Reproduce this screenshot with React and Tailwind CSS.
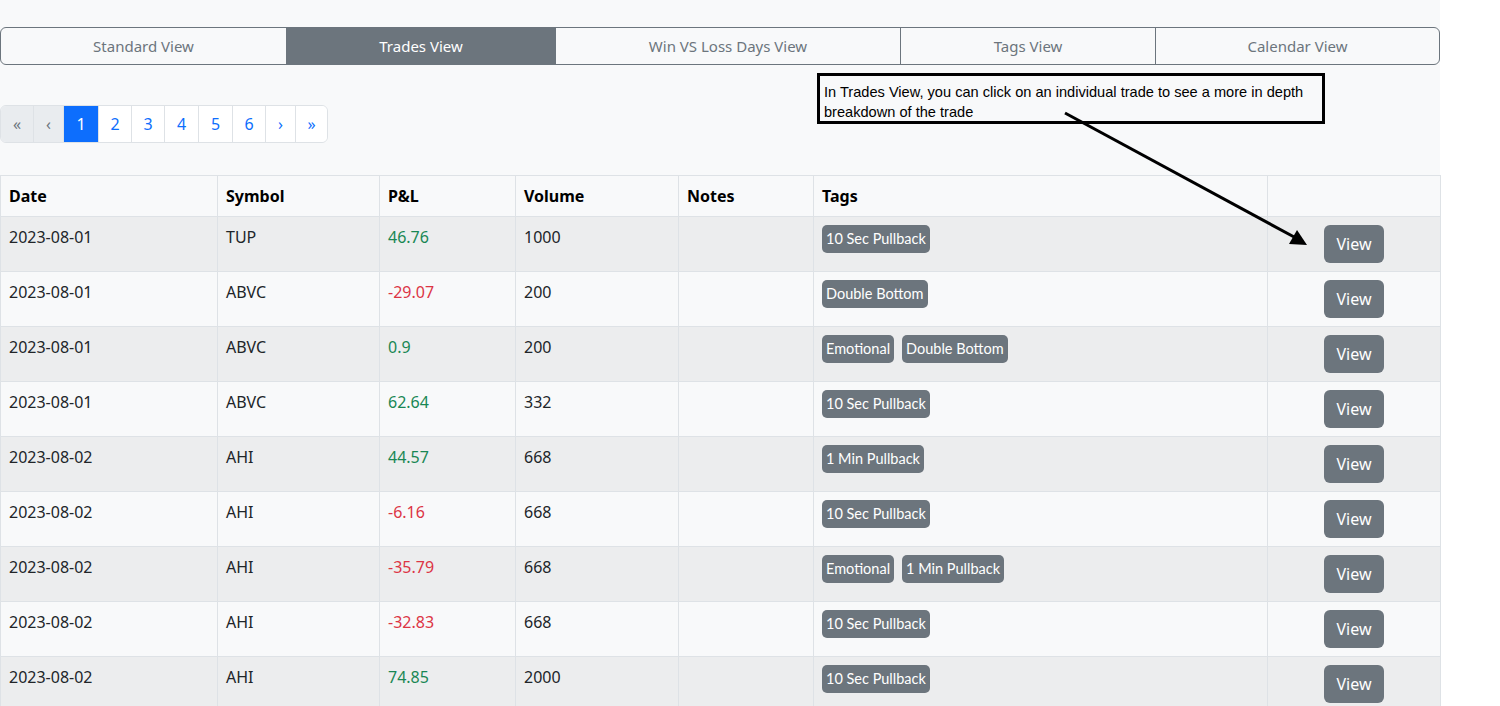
import React from 'react';

const tabs = [
    { label: 'Standard View', width: 'w-[285px]' },
    { label: 'Trades View', width: 'w-[269px]', active: true },
    { label: 'Win VS Loss Days View', width: 'w-[345px]' },
    { label: 'Tags View', width: 'w-[255px]' },
    { label: 'Calendar View', width: 'w-[284px]' },
];

const pages = [
    { label: '«', width: 'w-[32px]', disabled: true },
    { label: '‹', width: 'w-[30px]', disabled: true },
    { label: '1', width: 'w-[35px]', active: true },
    { label: '2', width: 'w-[33px]' },
    { label: '3', width: 'w-[33px]' },
    { label: '4', width: 'w-[34px]' },
    { label: '5', width: 'w-[34px]' },
    { label: '6', width: 'w-[33px]' },
    { label: '›', width: 'w-[30px]' },
    { label: '»', width: 'w-[32px]' },
];

// trades shown on page 1
const trades = [
    { date: '2023-08-01', symbol: 'TUP', pnl: 46.76, volume: 1000, tags: ['10 Sec Pullback'] },
    { date: '2023-08-01', symbol: 'ABVC', pnl: -29.07, volume: 200, tags: ['Double Bottom'] },
    { date: '2023-08-01', symbol: 'ABVC', pnl: 0.9, volume: 200, tags: ['Emotional', 'Double Bottom'] },
    { date: '2023-08-01', symbol: 'ABVC', pnl: 62.64, volume: 332, tags: ['10 Sec Pullback'] },
    { date: '2023-08-02', symbol: 'AHI', pnl: 44.57, volume: 668, tags: ['1 Min Pullback'] },
    { date: '2023-08-02', symbol: 'AHI', pnl: -6.16, volume: 668, tags: ['10 Sec Pullback'] },
    { date: '2023-08-02', symbol: 'AHI', pnl: -35.79, volume: 668, tags: ['Emotional', '1 Min Pullback'] },
    { date: '2023-08-02', symbol: 'AHI', pnl: -32.83, volume: 668, tags: ['10 Sec Pullback'] },
    { date: '2023-08-02', symbol: 'AHI', pnl: 74.85, volume: 2000, tags: ['10 Sec Pullback'] },
];

const columns = [
    { label: 'Date', width: 'w-[217px]' },
    { label: 'Symbol', width: 'w-[162px]' },
    { label: 'P&L', width: 'w-[136px]' },
    { label: 'Volume', width: 'w-[163px]' },
    { label: 'Notes', width: 'w-[135px]' },
    { label: 'Tags', width: 'w-[454px]' },
    { label: '', width: 'w-[173px]' },
];

const App = () => {
    return (
        <div className="min-h-screen bg-white font-['Noto_Sans','Open_Sans',sans-serif] text-[#212529]">
            <div className="relative w-[1440px] min-h-screen bg-[#f8f9fa] pt-[27px]">
                {/* View tabs */}
                <div className="flex h-[38px] rounded-md border border-[#6c757d] overflow-hidden">
                    {tabs.map((tab, i) => (
                        <button
                            key={tab.label}
                            className={`${tab.width} shrink-0 flex items-center justify-center text-[15px] ${
                                i > 0 ? 'border-l border-[#6c757d]' : ''
                            } ${tab.active ? 'bg-[#6c757d] text-white' : 'text-[#6c757d]'}`}
                        >
                            {tab.label}
                        </button>
                    ))}
                </div>

                {/* Pagination */}
                <div className="mt-[40px] flex">
                    <div className="flex h-[38px] rounded-md border border-[#dee2e6] overflow-hidden">
                        {pages.map((p, i) => (
                            <div
                                key={i}
                                className={`${p.width} flex items-center justify-center text-[16px] ${
                                    i > 0 ? 'border-l border-[#dee2e6]' : ''
                                } ${
                                    p.active
                                        ? 'bg-[#0d6efd] text-white'
                                        : p.disabled
                                        ? 'bg-[#e9ecef] text-[#6c757d]'
                                        : 'bg-white text-[#0d6efd]'
                                }`}
                            >
                                {p.label}
                            </div>
                        ))}
                    </div>
                </div>

                {/* Trades table */}
                <table className="mt-[32px] w-[1440px] table-fixed border-collapse text-[16px]">
                    <thead>
                        <tr className="bg-[#f8f9fa]">
                            {columns.map((c, i) => (
                                <th
                                    key={i}
                                    className={`${c.width} border border-[#dee2e6] px-2 py-2 text-left font-bold text-black leading-6`}
                                >
                                    {c.label}
                                </th>
                            ))}
                        </tr>
                    </thead>
                    <tbody>
                        {trades.map((t, i) => (
                            <tr key={i} className={i % 2 === 0 ? 'bg-[#ecedee]' : 'bg-[#f8f9fa]'}>
                                <td className="border border-[#dee2e6] px-2 py-2 align-top leading-6">{t.date}</td>
                                <td className="border border-[#dee2e6] px-2 py-2 align-top leading-6">{t.symbol}</td>
                                <td
                                    className={`border border-[#dee2e6] px-2 py-2 align-top leading-6 ${
                                        t.pnl >= 0 ? 'text-[#198754]' : 'text-[#dc3545]'
                                    }`}
                                >
                                    {t.pnl}
                                </td>
                                <td className="border border-[#dee2e6] px-2 py-2 align-top leading-6">{t.volume}</td>
                                <td className="border border-[#dee2e6] px-2 py-2 align-top leading-6"></td>
                                <td className="border border-[#dee2e6] px-2 py-2 align-top">
                                    <div className="flex gap-2">
                                        {t.tags.map((tag) => (
                                            <span
                                                key={tag}
                                                className="h-[28px] px-1 rounded-[5px] bg-[#6c757d] text-white font-['Lato',sans-serif] text-[14.5px] flex items-center"
                                            >
                                                {tag}
                                            </span>
                                        ))}
                                    </div>
                                </td>
                                <td className="border border-[#dee2e6] px-2 py-2 align-top">
                                    <div className="flex justify-center">
                                        <button className="w-[60px] h-[38px] rounded-md bg-[#6c757d] text-white text-[16px]">
                                            View
                                        </button>
                                    </div>
                                </td>
                            </tr>
                        ))}
                    </tbody>
                </table>

                {/* Annotation overlay */}
                <div className="absolute left-[817px] top-[73px] w-[508px] h-[51px] border-[3px] border-black bg-[#f8f9fa] px-[4px] pt-[6px] font-['Liberation_Sans',sans-serif] text-[14.6px] leading-[20px] text-black">
                    In Trades View, you can click on an individual trade to see a more in depth breakdown of the trade
                </div>
                <svg className="absolute left-0 top-0 pointer-events-none" width="1440" height="706">
                    <line x1="1065" y1="113" x2="1296" y2="238" stroke="black" strokeWidth="3" />
                    <polygon points="1307,245 1289,244 1297,230" fill="black" />
                </svg>
            </div>
        </div>
    );
};

export default App;
